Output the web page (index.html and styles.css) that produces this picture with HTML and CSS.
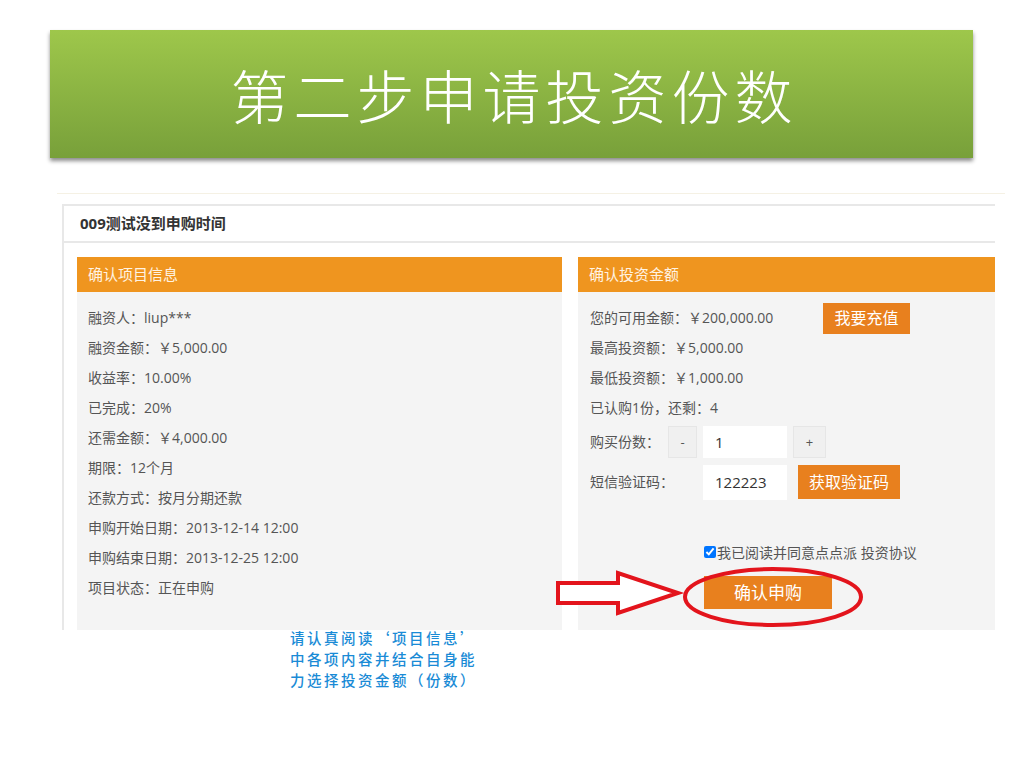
FILE: index.html
```html
<!DOCTYPE html>
<html lang="zh-CN">
<head>
    <meta charset="UTF-8">
    <title>第二步申请投资份数</title>
    <link rel="stylesheet" href="styles.css">
</head>
<body>
    <div class="banner">第二步申请投资份数</div>

    <div class="shot">
        <div class="card">
            <div class="card-title">009测试没到申购时间</div>
            <div class="panels">
                <div class="panel panel-left">
                    <div class="panel-head">确认项目信息</div>
                    <div class="panel-body">
                        <div class="row">融资人：liup***</div>
                        <div class="row">融资金额：￥5,000.00</div>
                        <div class="row">收益率：10.00%</div>
                        <div class="row">已完成：20%</div>
                        <div class="row">还需金额：￥4,000.00</div>
                        <div class="row">期限：12个月</div>
                        <div class="row">还款方式：按月分期还款</div>
                        <div class="row">申购开始日期：2013-12-14 12:00</div>
                        <div class="row">申购结束日期：2013-12-25 12:00</div>
                        <div class="row">项目状态：正在申购</div>
                    </div>
                </div>
                <div class="panel panel-right">
                    <div class="panel-head">确认投资金额</div>
                    <div class="panel-body">
                        <div class="row">
                            <span class="label label-wide">您的可用金额：￥200,000.00</span>
                            <span class="btn btn-recharge">我要充值</span>
                        </div>
                        <div class="row">最高投资额：￥5,000.00</div>
                        <div class="row">最低投资额：￥1,000.00</div>
                        <div class="row">已认购1份，还剩：4</div>
                        <div class="row row-qty">
                            <span class="label label-qty">购买份数：</span>
                            <span class="step">-</span>
                            <span class="field">1</span>
                            <span class="step step-plus">+</span>
                        </div>
                        <div class="row row-sms">
                            <span class="label label-sms">短信验证码：</span>
                            <span class="field field-sms">122223</span>
                            <span class="btn btn-code">获取验证码</span>
                        </div>
                        <div class="agree">
                            <input type="checkbox" checked>
                            <span>我已阅读并同意点点派 投资协议</span>
                        </div>
                        <div class="btn btn-confirm">确认申购</div>
                    </div>
                </div>
            </div>
        </div>
    </div>

    <div class="note">
        <div>请认真阅读‘项目信息’</div>
        <div>中各项内容并结合自身能</div>
        <div>力选择投资金额（份数）</div>
    </div>

    <svg class="marks" width="1024" height="768" viewBox="0 0 1024 768">
        <polygon points="558,583 618,583 618,573 678,593 618,613 618,603 558,603"
                 fill="#fff" stroke="#e3141c" stroke-width="4" stroke-linejoin="miter"/>
        <ellipse cx="773" cy="597" rx="88" ry="28" fill="none" stroke="#e3141c" stroke-width="4"/>
    </svg>
</body>
</html>
```

FILE: styles.css
```css
body {
    margin: 0;
    width: 1024px;
    height: 768px;
    position: relative;
    background: #fff;
    font-family: "Open Sans", "Noto Sans CJK SC", sans-serif;
    color: #555;
    overflow: hidden;
}
.banner {
    margin: 30px 0 0 50px;
    width: 923px;
    height: 128px;
    background: linear-gradient(#9ec74b, #78a03a);
    box-shadow: 0 3px 4px rgba(0, 0, 0, 0.45);
    display: flex;
    align-items: center;
    justify-content: center;
    color: #fff;
    font-family: "Noto Sans CJK SC", sans-serif;
    font-weight: 300;
    font-size: 58px;
    letter-spacing: 5px;
    text-indent: 5px;
}
.shot {
    margin: 35px 0 0 57px;
    width: 948px;
    border-top: 1px solid #f5f1e4;
}
.card {
    margin: 10px 0 0 5px;
    width: 931px;
    border-top: 2px solid #e8e8e8;
    border-left: 2px solid #e8e8e8;
}
.card-title {
    height: 35px;
    line-height: 35px;
    padding-left: 16px;
    border-bottom: 2px solid #e8e8e8;
    font-size: 15px;
    font-weight: bold;
    color: #333;
}
.panels {
    display: flex;
    gap: 16px;
    padding: 14px 0 0 13px;
}
.panel {
    height: 373px;
    background: #f4f4f4;
}
.panel-left {
    width: 485px;
}
.panel-right {
    flex: 1;
}
.panel-head {
    height: 35px;
    line-height: 35px;
    padding-left: 11px;
    background: #ef951f;
    color: #fff3e2;
    font-size: 15px;
}
.panel-body {
    padding: 11px 11px 0 11px;
    font-size: 14px;
}
.panel-right .panel-body {
    padding-left: 12px;
}
.row {
    height: 30px;
    line-height: 30px;
    display: flex;
    align-items: center;
}
.label-wide {
    width: 233px;
}
.label-qty {
    width: 78px;
}
.label-sms {
    width: 113px;
}
.btn {
    background: #e8801e;
    color: #fff;
    text-align: center;
    font-size: 16px;
}
.btn-recharge {
    width: 87px;
    height: 31px;
    line-height: 31px;
}
.row-qty {
    margin-top: 3px;
    height: 32px;
}
.step {
    width: 27px;
    height: 30px;
    line-height: 30px;
    background: #f0f0f0;
    border: 1px solid #e6e6e6;
    text-align: center;
    font-size: 13px;
}
.step-plus {
    width: 31px;
    margin-left: 6px;
}
.field {
    width: 72px;
    height: 32px;
    line-height: 32px;
    margin-left: 6px;
    padding-left: 12px;
    background: #fff;
    color: #333;
    font-size: 15px;
}
.row-sms {
    margin-top: 6px;
    height: 36px;
}
.field-sms {
    height: 35px;
    line-height: 35px;
    margin-left: 0;
}
.btn-code {
    width: 102px;
    height: 34px;
    line-height: 34px;
    margin-left: 11px;
}
.agree {
    margin: 42px 0 0 114px;
    height: 20px;
    display: flex;
    align-items: center;
    font-size: 14px;
    color: #555;
}
.agree input {
    margin: 0 1px 0 0;
    width: 12px;
    height: 12px;
}
.btn-confirm {
    margin: 14px 0 0 114px;
    width: 128px;
    height: 33px;
    line-height: 33px;
    font-size: 17px;
}
.note {
    margin: -3px 0 0 290px;
    font-family: "Noto Sans CJK SC", sans-serif;
    font-size: 14.5px;
    font-weight: 500;
    letter-spacing: 2.5px;
    line-height: 21px;
    color: #1a8bd6;
}
.marks {
    position: absolute;
    left: 0;
    top: 0;
    pointer-events: none;
}
```
